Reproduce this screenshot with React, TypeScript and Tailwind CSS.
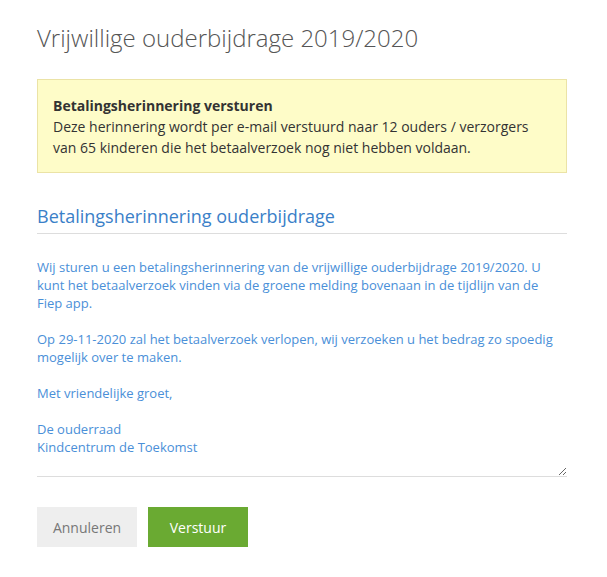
import React from "react";

const message = `Wij sturen u een betalingsherinnering van de vrijwillige ouderbijdrage 2019/2020. U kunt het betaalverzoek vinden via de groene melding bovenaan in de tijdlijn van de Fiep app.

Op 29-11-2020 zal het betaalverzoek verlopen, wij verzoeken u het bedrag zo spoedig mogelijk over te maken.

Met vriendelijke groet,

De ouderraad
Kindcentrum de Toekomst
`;

const App = () => {
    return (
        <div className="min-h-[577px] bg-white font-['Open_Sans',sans-serif]">
            <div className="w-[530px] ml-[37px] pt-[22px]">
                {/* Page title */}
                <h1 className="text-[24px] leading-[32px] font-light text-[#555555]">
                    Vrijwillige ouderbijdrage 2019/2020
                </h1>

                {/* Notice */}
                <div className="mt-[25px] border border-[#ebe3a6] bg-[#fefcc8] px-[15px] pt-[15px] pb-[14px] text-[14px] leading-[21px] text-[#333333]">
                    <p className="font-bold">Betalingsherinnering versturen</p>
                    <p>
                        Deze herinnering wordt per e-mail verstuurd naar 12 ouders /
                        verzorgers van 65 kinderen die het betaalverzoek nog niet hebben
                        voldaan.
                    </p>
                </div>

                {/* Form */}
                <h2 className="mt-[31px] pb-[4px] border-b border-[#dddddd] text-[18px] leading-[25px] text-[#3a80c8]">
                    Betalingsherinnering ouderbijdrage
                </h2>

                <textarea
                    readOnly
                    value={message}
                    className="mt-[16px] block w-full h-[227px] py-[8px] pl-0 pr-[8px] border-0 border-b border-[#dddddd] bg-white text-[13px] leading-[18px] text-[#4a8fd8] resize-y outline-none overflow-hidden"
                />

                <div className="mt-[30px] flex gap-[11px]">
                    <button className="w-[100px] h-[40px] bg-[#eeeeee] text-[14px] text-[#777777]">
                        Annuleren
                    </button>
                    <button className="w-[100px] h-[40px] bg-[#6aaa32] text-[14px] text-white">
                        Verstuur
                    </button>
                </div>
            </div>
        </div>
    );
};

export default App;
